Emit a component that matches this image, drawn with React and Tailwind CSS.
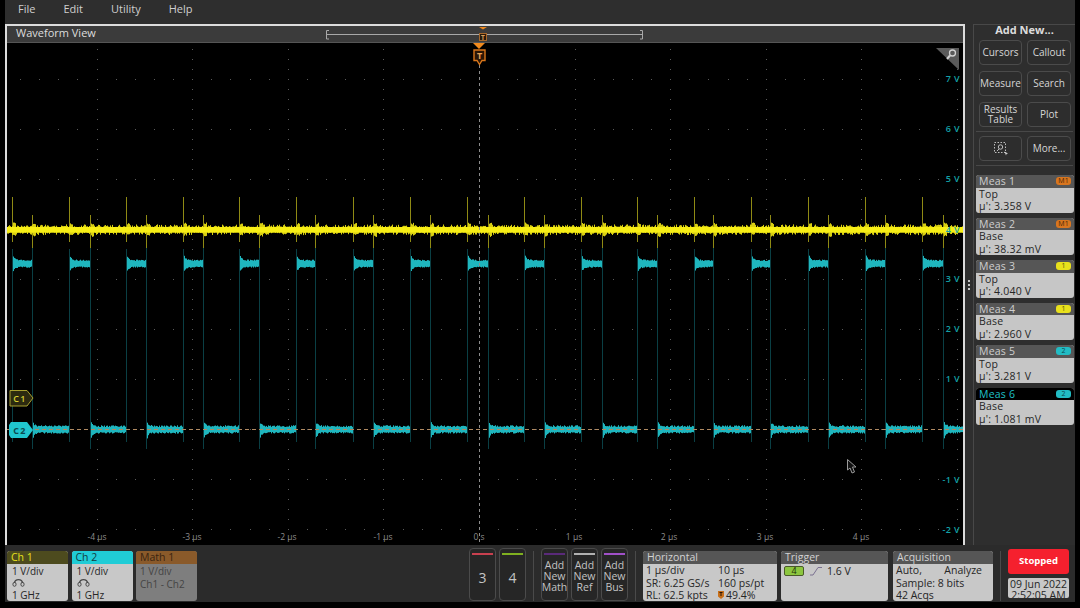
const rng = (seed) => () => (seed = (seed * 16807) % 2147483647) / 2147483647

// builds the two traces once, noise is seeded so the picture stays the same
const buildTraces = () => {
  const r = rng(4711)
  let yellowNoise = ""
  let yellowSpikes = ""
  let cyan = ""
  let edges = ""

  for (let x = 7; x < 963; x++) {
    const y1 = 226 - Math.pow(r(), 2.4) * 2.6
    const y2 = 231.5 + Math.pow(r(), 2.4) * 2.6
    yellowNoise += `M${x + 0.5} ${y1.toFixed(1)}V${y2.toFixed(1)}`
  }

  for (let i = 0; i < 17; i++) {
    const rise = Math.round(12 + 56.85 * i)
    const fall = rise + 20 + Math.round(r() * 2 - 1)
    const next = Math.round(12 + 56.85 * (i + 1))

    yellowSpikes += `M${rise + 0.5} 196V241M${fall + 0.5} 214V247`
    for (let k = 0; k < 3; k++) {
      yellowNoise += `M${rise + k + 1.5} ${223.5 - r() * 2}V${233 + r() * 2}`
      yellowNoise += `M${fall + k + 1.5} ${223.5 - r() * 2}V${234 + r() * 2}`
    }
    edges += `M${rise + 0.5} 248V441M${fall + 0.5} 247V448`

    for (let x = rise + 1; x < fall; x++) {
      const d = Math.exp(-(x - rise) / 1.8)
      cyan += `M${x + 0.5} ${(260 - d * 7 - r() * 1.4).toFixed(1)}V${(265.5 + d * 6 + r() * 1.2).toFixed(1)}`
    }
    for (let x = fall + 1; x < Math.min(next, 963); x++) {
      const d = Math.exp(-(x - fall) / 1.6)
      cyan += `M${x + 0.5} ${(426 - d * 6 - r() * 1.8).toFixed(1)}V${(431 + d * 9 + r() * 1.6).toFixed(1)}`
    }
  }
  return { yellowNoise, yellowSpikes, cyan, edges }
}

const traces = buildTraces()

const buildGrid = () => {
  let d = ""
  for (let k = -5; k <= 5; k++) {
    const x = Math.round(479 + k * 95.6)
    if (k === 0) continue
    for (let y = 48; y < 543; y += 10) d += `M${x} ${y}h1v1h-1z`
  }
  for (let y = 78; y < 540; y += 50) {
    for (let k = -24; k <= 25; k++) {
      d += `M${Math.round(479 + k * 19.12)} ${y}h1v1h-1z`
    }
  }
  return d
}

const gridDots = buildGrid()

const voltLabels = [
  ["7 V", 81], ["6 V", 131], ["5 V", 181], ["4 V", 232], ["3 V", 281],
  ["2 V", 331], ["1 V", 381], ["-1 V", 482], ["-2 V", 532],
]

const timeLabels = [
  ["-4 µs", 97], ["-3 µs", 192], ["-2 µs", 287], ["-1 µs", 383], ["0 s", 479],
  ["1 µs", 574], ["2 µs", 669], ["3 µs", 765], ["4 µs", 861],
]

const Plot = () => (
  <svg viewBox="7 42 956 502" className="block w-[956px] h-[502px] bg-black">
    <path d={gridDots} fill="#5a5a5a" />
    <path d={traces.edges} stroke="#0a3f44" strokeWidth="1" fill="none" />
    <path d={traces.yellowSpikes} stroke="#8f8a14" strokeWidth="1" fill="none" />
    <path d={traces.yellowNoise} stroke="#d9d012" strokeWidth="1" fill="none" />
    <rect x="7" y="226" width="956" height="5.5" fill="#f7ee16" />
    <path d={traces.cyan} stroke="#1fb6be" strokeWidth="1" fill="none" />
    <path d="M7 428.5H963" stroke="#b08a62" strokeWidth="1" strokeDasharray="4 3" fill="none" />
    <path d="M479.5 64V543" stroke="#8c8c8c" strokeWidth="1" strokeDasharray="3 3" fill="none" />

    {voltLabels.map(([t, y]) => (
      <text key={t} x="960" y={y} textAnchor="end" fontSize="9" fontWeight="600" letterSpacing="0.4" fill="#12a2a8">{t}</text>
    ))}
    {timeLabels.map(([t, x]) => (
      <text key={t} x={x} y="539" textAnchor="middle" fontSize="8.5" fill="#8d8d8d">{t}</text>
    ))}

    {/* trigger marker */}
    <path d="M473 42H485L479 48Z" fill="#f08a1e" />
    <path d="M474 49H485V59.5H482L479.5 63.5L477 59.5H474Z" fill="#2a1606" stroke="#d9761a" strokeWidth="1.4" />
    <text x="479.5" y="58" textAnchor="middle" fontSize="9" fontWeight="700" fill="#e8a35a">T</text>

    {/* zoom corner */}
    <path d="M936 47H959V69Z" fill="#5a5a5a" />
    <circle cx="952.5" cy="52" r="3" fill="none" stroke="#d2d2d2" strokeWidth="1.3" />
    <path d="M950 54.5L947 58" stroke="#d2d2d2" strokeWidth="2" />

    {/* channel flags */}
    <path d="M10 389.5H27L33 397L27 405H10Z" fill="#2c2a10" stroke="#a8a030" strokeWidth="1" />
    <text x="20" y="400.5" textAnchor="middle" fontSize="9" fontWeight="600" letterSpacing="1.4" fill="#d8d030">C1</text>
    <path d="M9 424L11 421H27L33 429L27 437H11L9 434Z" fill="#20c6ce" />
    <text x="20" y="432.5" textAnchor="middle" fontSize="9" fontWeight="700" letterSpacing="1.4" fill="#0c4a50">C2</text>

    {/* mouse pointer */}
    <path d="M847.5 458.5V469L850 467L852 472L854.5 471L852.5 466H856Z" fill="#111" stroke="#9a9a9a" strokeWidth="1" />
  </svg>
)

const ToolButton = ({ children }) => (
  <button className="h-[25px] pb-[1px] rounded-[4px] border border-[#4b4b4b] bg-[#2d2d2d] text-[#d6d6d6] text-[10px] leading-[10px] flex items-center justify-center text-center">
    {children}
  </button>
)

const MeasCard = ({ name, kind, value, badge, badgeClass, active }) => (
  <div className="h-[37.5px] rounded-[3px] bg-[#c6c6c6] text-[10.5px] tracking-[0.2px]">
    <div className={active
      ? "h-[12.5px] rounded-t-[3px] bg-black text-[#1fc0c8] flex items-center justify-between px-[3px] leading-[12.5px]"
      : "h-[12.5px] rounded-t-[3px] bg-[#565656] text-[#cfcfcf] flex items-center justify-between px-[3px] leading-[12.5px]"}>
      <span>{name}</span>
      <span className={`w-[15px] h-[8px] rounded-[3px] text-[7px] leading-[8px] text-center ${badgeClass}`}>{badge}</span>
    </div>
    <div className="px-[3px] leading-[12.5px] text-[#262626]">
      <div>{kind}</div>
      <div>{value}</div>
    </div>
  </div>
)

const orange = "bg-[#d9761f] text-[#4a2606]"
const yellow = "bg-[#e9e11c] text-[#55520a]"
const cyan = "bg-[#22bcc4] text-[#0c4a50]"

const measures = [
  { name: "Meas 1", kind: "Top", value: "µ': 3.358 V", badge: "M1", badgeClass: orange },
  { name: "Meas 2", kind: "Base", value: "µ': 38.32 mV", badge: "M1", badgeClass: orange },
  { name: "Meas 3", kind: "Top", value: "µ': 4.040 V", badge: "1", badgeClass: yellow },
  { name: "Meas 4", kind: "Base", value: "µ': 2.960 V", badge: "1", badgeClass: yellow },
  { name: "Meas 5", kind: "Top", value: "µ': 3.281 V", badge: "2", badgeClass: cyan },
  { name: "Meas 6", kind: "Base", value: "µ': 1.081 mV", badge: "2", badgeClass: cyan, active: true },
]

const ProbeIcon = () => (
  <svg width="13" height="9" viewBox="0 0 13 9" className="my-[1px]">
    <path d="M2.5 5C3 0.5 10 0.5 10.5 5" fill="none" stroke="#4a4a4a" strokeWidth="1.4" />
    <ellipse cx="2.5" cy="6.3" rx="1.6" ry="2" fill="none" stroke="#4a4a4a" strokeWidth="1" />
    <ellipse cx="10.5" cy="6.3" rx="1.6" ry="2" fill="none" stroke="#4a4a4a" strokeWidth="1" />
  </svg>
)

const ChannelCard = ({ title, headClass }) => (
  <div className="w-[61px] h-[50px] rounded-[3px] overflow-hidden bg-[#c8c8c8] text-[#262626]">
    <div className={`h-[12.5px] px-[4px] text-[10.5px] leading-[12.5px] ${headClass}`}>{title}</div>
    <div className="px-[5px] text-[10px] leading-[12px] pt-[1px]">
      <div>1 V/div</div>
      <ProbeIcon />
      <div className="mt-[2px]">1 GHz</div>
    </div>
  </div>
)

const ChanButton = ({ label, barClass }) => (
  <button className="w-[27px] h-[53px] rounded-[4px] border border-[#4b4b4b] bg-[#262626] text-[#c4c4c4] flex flex-col items-center">
    <span className={`mt-[4px] w-[21px] h-[2px] ${barClass}`} />
    <span className="flex-1 flex items-center text-[14px]">{label}</span>
  </button>
)

const AddButton = ({ label, barClass }) => (
  <button className="w-[27px] h-[53px] rounded-[4px] border border-[#4b4b4b] bg-[#262626] text-[#c4c4c4] flex flex-col items-center">
    <span className={`mt-[4px] w-[21px] h-[2px] ${barClass}`} />
    <span className="mt-[5px] text-[10.5px] leading-[11px] text-center">Add<br />New<br />{label}</span>
  </button>
)

const InfoPanel = ({ title, className, children }) => (
  <div className={`h-[50px] rounded-[3px] overflow-hidden bg-[#c8c8c8] text-[#262626] ${className}`}>
    <div className="h-[13px] bg-[#565656] text-[#d2d2d2] px-[4px] text-[10.5px] leading-[13px]">{title}</div>
    <div className="px-[3px] text-[10.5px] leading-[12.5px]">{children}</div>
  </div>
)

const Divider = () => <div className="w-px h-[50px] bg-[#4a4a4a]" />

const App = () => {
  return (
    <div className="w-[1080px] h-[608px] bg-black overflow-hidden font-['Open_Sans',sans-serif]">
      <div className="ml-[5px] w-[1070px] h-[602px] bg-[#2e2e2e] flex flex-col">
        {/* Menu bar */}
        <div className="h-[24px] flex items-center gap-[28px] pl-[13px] pb-[6px] text-[11px] text-[#cfcfcf]">
          <span>File</span>
          <span>Edit</span>
          <span>Utility</span>
          <span>Help</span>
        </div>

        <div className="h-[521px] flex">
          {/* Waveform view */}
          <div className="w-[960px] border-2 border-[#dcdcdc]">
            <div className="relative h-[17px] bg-[#3b3b3b] border-b border-[#555] pl-[9px] text-[11px] leading-[13px] text-[#dddddd]">
              Waveform View
              <svg viewBox="320 25 340 16" className="absolute left-[313px] top-0 w-[340px] h-[16px]">
                <path d="M329 29.5H326.5V38H329M326.5 33.5H642.5M640 29.5H642.5V38H640" fill="none" stroke="#a8a8a8" strokeWidth="1" />
                <path d="M479 26H487L483 28.5Z" fill="#f08a1e" />
                <rect x="479.5" y="32.5" width="7" height="7" fill="#2a1a0a" stroke="#a8682a" strokeWidth="1" />
                <text x="483" y="38.5" textAnchor="middle" fontSize="6.5" fontWeight="700" fill="#d9a060">T</text>
              </svg>
            </div>
            <Plot />
          </div>

          {/* Grip */}
          <div className="w-[8px] flex flex-col items-center justify-center gap-[2px]">
            <span className="w-[2px] h-[2px] bg-[#c8c8c8]" />
            <span className="w-[2px] h-[2px] bg-[#c8c8c8]" />
            <span className="w-[2px] h-[2px] bg-[#c8c8c8]" />
          </div>

          {/* Right panel */}
          <div className="w-[102px] border-l border-t border-[#484848] flex flex-col">
            <div className="h-[15px] text-center text-[11px] leading-[10px] font-bold text-[#dcdcdc]">Add New...</div>
            <div className="grid grid-cols-[43px_44px] gap-x-[5px] gap-y-[6px] pl-[5px]">
              <ToolButton>Cursors</ToolButton>
              <ToolButton>Callout</ToolButton>
              <ToolButton>Measure</ToolButton>
              <ToolButton>Search</ToolButton>
              <ToolButton>Results<br />Table</ToolButton>
              <ToolButton>Plot</ToolButton>
            </div>
            <div className="h-px bg-[#484848] mx-[2px] mt-[4px]" />
            <div className="grid grid-cols-[43px_44px] gap-x-[5px] pl-[5px] mt-[4px]">
              <ToolButton>
                <svg width="16" height="16" viewBox="0 0 16 16">
                  <rect x="1.5" y="2.5" width="11" height="10" fill="none" stroke="#bdbdbd" strokeWidth="1" strokeDasharray="1.5 1.5" />
                  <circle cx="7.5" cy="7" r="2.2" fill="none" stroke="#bdbdbd" strokeWidth="1" />
                  <path d="M6 9L4 11" stroke="#bdbdbd" strokeWidth="1" />
                  <path d="M11.5 11.5L15 13.5L13.5 14L13 15.5Z" fill="#d0d0d0" />
                </svg>
              </ToolButton>
              <ToolButton>More...</ToolButton>
            </div>
            <div className="h-px bg-[#484848] mx-[2px] mt-[4px]" />
            <div className="flex flex-col gap-[5px] pl-[2px] pr-[1px] mt-[9px]">
              {measures.map((m) => (
                <MeasCard key={m.name} {...m} />
              ))}
            </div>
          </div>
        </div>

        {/* Bottom bar */}
        <div className="flex-1 flex items-end pl-[2px] pb-[1px] bg-[#2b2b2b]">
          <div className="flex gap-[3.5px]">
            <ChannelCard title="Ch 1" headClass="bg-[#4d4b1e] text-[#e9e11c]" />
            <ChannelCard title="Ch 2" headClass="bg-[#20ccd6] text-[#123c40]" />
            <div className="w-[61px] h-[50px] rounded-[3px] overflow-hidden bg-[#7e7e7e] text-[#444444]">
              <div className="h-[12.5px] bg-[#8a5a2a] text-[#3a2410] px-[4px] text-[10.5px] leading-[12.5px]">Math 1</div>
              <div className="px-[4px] pt-[1px] text-[10px] leading-[13px]">
                <div>1 V/div</div>
                <div>Ch1 - Ch2</div>
              </div>
            </div>
          </div>

          <div className="flex gap-[3px] ml-[272px]">
            <ChanButton label="3" barClass="bg-[#c8404f]" />
            <ChanButton label="4" barClass="bg-[#7fb020]" />
          </div>
          <div className="mx-[7px] flex items-center"><Divider /></div>
          <div className="flex gap-[3px]">
            <AddButton label="Math" barClass="bg-[#5a2a7a]" />
            <AddButton label="Ref" barClass="bg-[#b0b0b0]" />
            <AddButton label="Bus" barClass="bg-[#a050c8]" />
          </div>
          <div className="mx-[7px] flex items-center"><Divider /></div>

          <InfoPanel title="Horizontal" className="w-[134px]">
            <div className="grid grid-cols-[72px_1fr]">
              <span>1 µs/div</span><span>10 µs</span>
              <span>SR: 6.25 GS/s</span><span>160 ps/pt</span>
              <span>RL: 62.5 kpts</span>
              <span className="flex items-center gap-[2px]">
                <svg width="6" height="8" viewBox="0 0 6 8">
                  <path d="M0 0H6V5.5L3 8L0 5.5Z" fill="#c8701a" />
                  <path d="M1.5 1.5H4.5M3 1.5V5" stroke="#2a1606" strokeWidth="1" />
                </svg>
                49.4%
              </span>
            </div>
          </InfoPanel>

          <InfoPanel title="Trigger" className="w-[107px] ml-[4px]">
            <div className="flex items-center pt-[1px]">
              <span className="w-[20px] h-[10px] rounded-[2px] bg-[#8cc63f] border border-[#4a5a2a] text-[9px] leading-[8px] text-center text-[#22300a]">4</span>
              <svg width="12" height="10" viewBox="0 0 12 10" className="ml-[6px]">
                <path d="M0 9H3L8 1.5H12" fill="none" stroke="#7a7090" strokeWidth="1" />
              </svg>
              <span className="ml-[5px]">1.6 V</span>
            </div>
          </InfoPanel>

          <InfoPanel title="Acquisition" className="w-[100px] ml-[5px]">
            <div className="flex justify-between pr-[8px]"><span>Auto,</span><span>Analyze</span></div>
            <div>Sample: 8 bits</div>
            <div>42 Acqs</div>
          </InfoPanel>

          <div className="mx-[7px] flex items-center"><Divider /></div>

          <div className="w-[61px] h-[52px] flex flex-col gap-[4px] pb-[3px]">
            <div className="h-[25px] rounded-[3px] bg-[#f5202e] text-white text-[9.5px] font-bold flex items-center justify-center">Stopped</div>
            <div className="h-[20px] pt-[1px] rounded-[2px] bg-[#c8c8c8] text-[#262626] text-[10.5px] leading-[11px] text-center overflow-hidden">
              09 Jun 2022<br />2:52:05 AM
            </div>
          </div>
        </div>
      </div>
    </div>
  )
}

export default App
